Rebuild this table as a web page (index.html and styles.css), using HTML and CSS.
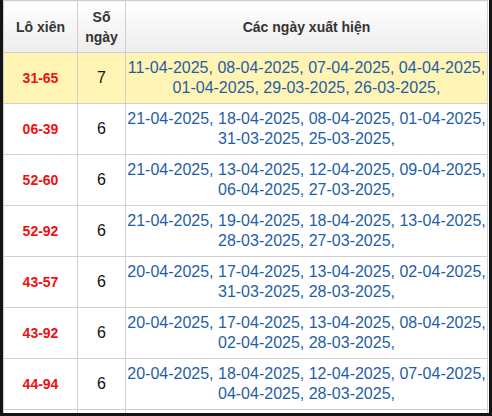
FILE: index.html
```html
<!DOCTYPE html>
<html lang="vi">
<head>
<meta charset="utf-8">
<link rel="stylesheet" href="styles.css">
</head>
<body>
<div class="frame">
<table class="lx">
<colgroup><col class="c1"><col class="c2"><col class="c3"></colgroup>
<thead>
<tr><th>Lô xiên</th><th>Số<br>ngày</th><th>Các ngày xuất hiện</th></tr>
</thead>
<tbody>
<tr class="hl"><td class="code">31-65</td><td class="num">7</td><td class="dates">11-04-2025, 08-04-2025, 07-04-2025, 04-04-2025, 01-04-2025, 29-03-2025, 26-03-2025,</td></tr>
<tr><td class="code">06-39</td><td class="num">6</td><td class="dates">21-04-2025, 18-04-2025, 08-04-2025, 01-04-2025, 31-03-2025, 25-03-2025,</td></tr>
<tr><td class="code">52-60</td><td class="num">6</td><td class="dates">21-04-2025, 13-04-2025, 12-04-2025, 09-04-2025, 06-04-2025, 27-03-2025,</td></tr>
<tr><td class="code">52-92</td><td class="num">6</td><td class="dates">21-04-2025, 19-04-2025, 18-04-2025, 13-04-2025, 28-03-2025, 27-03-2025,</td></tr>
<tr><td class="code">43-57</td><td class="num">6</td><td class="dates">20-04-2025, 17-04-2025, 13-04-2025, 02-04-2025, 31-03-2025, 28-03-2025,</td></tr>
<tr><td class="code">43-92</td><td class="num">6</td><td class="dates">20-04-2025, 17-04-2025, 13-04-2025, 08-04-2025, 02-04-2025, 28-03-2025,</td></tr>
<tr><td class="code">44-94</td><td class="num">6</td><td class="dates">20-04-2025, 18-04-2025, 12-04-2025, 07-04-2025, 04-04-2025, 28-03-2025,</td></tr>
<tr class="tail"><td></td><td></td><td></td></tr>
</tbody>
</table>
</div>
</body>
</html>
```
FILE: styles.css
```css
html, body {
  margin: 0;
  padding: 0;
}
body {
  background: #141414;
  width: 492px;
  height: 416px;
  overflow: hidden;
  font-family: "Liberation Sans", Arial, sans-serif;
}
.frame {
  margin-left: 3px;
  width: 486px;
  height: 413px;
  background: #fff;
  overflow: hidden;
}
.lx {
  border-collapse: collapse;
  table-layout: fixed;
  width: 484px;
}
.c1 { width: 74px; }
.c2 { width: 48px; }
.c3 { width: 362px; }
.lx th, .lx td {
  border: 1px solid #cfcfcf;
  text-align: center;
  vertical-align: middle;
  padding: 5px 0;
}
.lx th {
  height: 41px;
  padding: 5px 0;
  font-size: 14px;
  line-height: 20px;
  font-weight: bold;
  color: #333;
  background: linear-gradient(#ffffff, #ededed);
}
.lx td {
  height: 40px;
  line-height: 20px;
}
.hl td {
  background: #fff4b4;
}
.code {
  color: #ee1111;
  font-weight: bold;
  font-size: 14px;
}
.num {
  color: #111;
  font-size: 16px;
}
.dates {
  color: #1f5ea6;
  font-size: 16px;
}
```
